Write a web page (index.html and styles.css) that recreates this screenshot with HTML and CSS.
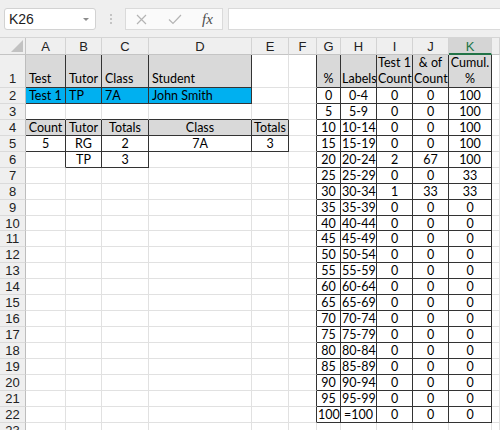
FILE: index.html
```html
<!DOCTYPE html>
<html lang="en">
<head>
<meta charset="utf-8">
<title>Test results</title>
<link rel="stylesheet" href="styles.css">
</head>
<body>
<div class="toolbar">
  <div class="namebox"><span>K26</span><span class="caret"></span></div>
  <div class="grip"><span></span><span></span><span></span></div>
  <div class="fxbox">
    <svg class="ico-x" width="11" height="11" viewBox="0 0 11 11"><path d="M1 1L10 10M10 1L1 10" stroke="#b4b4b4" stroke-width="1.2" fill="none"/></svg>
    <svg class="ico-ok" width="14" height="11" viewBox="0 0 14 11"><path d="M1 5.5L5 9.5L13 1" stroke="#b4b4b4" stroke-width="1.2" fill="none"/></svg>
    <span class="fx">fx</span>
  </div>
  <div class="formula"></div>
</div>

<div class="sheet">
  <!-- column headers -->
  <div class="corner"><svg width="12" height="12" viewBox="0 0 12 12"><path d="M12 0V12H0Z" fill="#c2c2c2"/></svg></div>
  <div class="ch">A</div><div class="ch">B</div><div class="ch">C</div><div class="ch">D</div><div class="ch">E</div><div class="ch">F</div><div class="ch">G</div><div class="ch">H</div><div class="ch">I</div><div class="ch">J</div><div class="ch sel">K</div><div class="ch"></div>

  <!-- row 1 -->
  <div class="rh tall">1</div>
  <div class="g l r b p1">Test</div><div class="g l r b p1">Tutor</div><div class="g l r b p1">Class</div><div class="g l r b p1">Student</div>
  <div></div><div class="r"></div>
  <div class="g r b p1">%</div><div class="g r b p1">Labels</div><div class="g r b">Test 1<br>Count</div><div class="g r b">&amp; of<br>Count</div><div class="g r b">Cumul.<br>%</div><div></div>

  <!-- row 2 -->
  <div class="rh">2</div>
  <div class="bl l r b">Test 1</div><div class="bl l r b">TP</div><div class="bl l r b">7A</div><div class="bl l r b">John Smith</div>
  <div></div><div class="r"></div>
  <div class="r b">0</div><div class="r b">0-4</div><div class="r b">0</div><div class="r b">0</div><div class="r b">100</div><div></div>

  <!-- row 3 -->
  <div class="rh">3</div>
  <div class="b"></div><div class="b"></div><div class="b"></div><div class="b"></div><div class="b"></div><div class="r"></div>
  <div class="r b">5</div><div class="r b">5-9</div><div class="r b">0</div><div class="r b">0</div><div class="r b">100</div><div></div>

  <!-- row 4 -->
  <div class="rh">4</div>
  <div class="g r b">Count</div><div class="g r b">Tutor</div><div class="g r b">Totals</div><div class="g r b">Class</div><div class="g r b">Totals</div><div class="r"></div>
  <div class="r b">10</div><div class="r b">10-14</div><div class="r b">0</div><div class="r b">0</div><div class="r b">100</div><div></div>

  <!-- row 5 -->
  <div class="rh">5</div>
  <div class="r b">5</div><div class="r b">RG</div><div class="r b">2</div><div class="r b">7A</div><div class="r b">3</div><div class="r"></div>
  <div class="r b">15</div><div class="r b">15-19</div><div class="r b">0</div><div class="r b">0</div><div class="r b">100</div><div></div>

  <!-- row 6 -->
  <div class="rh">6</div>
  <div class="r"></div><div class="r b">TP</div><div class="r b">3</div><div></div><div></div><div class="r"></div>
  <div class="r b">20</div><div class="r b">20-24</div><div class="r b">2</div><div class="r b">67</div><div class="r b">100</div><div></div>

  <!-- row 7 -->
  <div class="rh">7</div>
  <div></div><div></div><div></div><div></div><div></div><div class="r"></div>
  <div class="r b">25</div><div class="r b">25-29</div><div class="r b">0</div><div class="r b">0</div><div class="r b">33</div><div></div>

  <!-- row 8 -->
  <div class="rh">8</div>
  <div></div><div></div><div></div><div></div><div></div><div class="r"></div>
  <div class="r b">30</div><div class="r b">30-34</div><div class="r b">1</div><div class="r b">33</div><div class="r b">33</div><div></div>

  <!-- row 9 -->
  <div class="rh">9</div>
  <div></div><div></div><div></div><div></div><div></div><div class="r"></div>
  <div class="r b">35</div><div class="r b">35-39</div><div class="r b">0</div><div class="r b">0</div><div class="r b">0</div><div></div>

  <!-- row 10 -->
  <div class="rh">10</div>
  <div></div><div></div><div></div><div></div><div></div><div class="r"></div>
  <div class="r b">40</div><div class="r b">40-44</div><div class="r b">0</div><div class="r b">0</div><div class="r b">0</div><div></div>

  <!-- row 11 -->
  <div class="rh">11</div>
  <div></div><div></div><div></div><div></div><div></div><div class="r"></div>
  <div class="r b">45</div><div class="r b">45-49</div><div class="r b">0</div><div class="r b">0</div><div class="r b">0</div><div></div>

  <!-- row 12 -->
  <div class="rh">12</div>
  <div></div><div></div><div></div><div></div><div></div><div class="r"></div>
  <div class="r b">50</div><div class="r b">50-54</div><div class="r b">0</div><div class="r b">0</div><div class="r b">0</div><div></div>

  <!-- row 13 -->
  <div class="rh">13</div>
  <div></div><div></div><div></div><div></div><div></div><div class="r"></div>
  <div class="r b">55</div><div class="r b">55-59</div><div class="r b">0</div><div class="r b">0</div><div class="r b">0</div><div></div>

  <!-- row 14 -->
  <div class="rh">14</div>
  <div></div><div></div><div></div><div></div><div></div><div class="r"></div>
  <div class="r b">60</div><div class="r b">60-64</div><div class="r b">0</div><div class="r b">0</div><div class="r b">0</div><div></div>

  <!-- row 15 -->
  <div class="rh">15</div>
  <div></div><div></div><div></div><div></div><div></div><div class="r"></div>
  <div class="r b">65</div><div class="r b">65-69</div><div class="r b">0</div><div class="r b">0</div><div class="r b">0</div><div></div>

  <!-- row 16 -->
  <div class="rh">16</div>
  <div></div><div></div><div></div><div></div><div></div><div class="r"></div>
  <div class="r b">70</div><div class="r b">70-74</div><div class="r b">0</div><div class="r b">0</div><div class="r b">0</div><div></div>

  <!-- row 17 -->
  <div class="rh">17</div>
  <div></div><div></div><div></div><div></div><div></div><div class="r"></div>
  <div class="r b">75</div><div class="r b">75-79</div><div class="r b">0</div><div class="r b">0</div><div class="r b">0</div><div></div>

  <!-- row 18 -->
  <div class="rh">18</div>
  <div></div><div></div><div></div><div></div><div></div><div class="r"></div>
  <div class="r b">80</div><div class="r b">80-84</div><div class="r b">0</div><div class="r b">0</div><div class="r b">0</div><div></div>

  <!-- row 19 -->
  <div class="rh">19</div>
  <div></div><div></div><div></div><div></div><div></div><div class="r"></div>
  <div class="r b">85</div><div class="r b">85-89</div><div class="r b">0</div><div class="r b">0</div><div class="r b">0</div><div></div>

  <!-- row 20 -->
  <div class="rh">20</div>
  <div></div><div></div><div></div><div></div><div></div><div class="r"></div>
  <div class="r b">90</div><div class="r b">90-94</div><div class="r b">0</div><div class="r b">0</div><div class="r b">0</div><div></div>

  <!-- row 21 -->
  <div class="rh">21</div>
  <div></div><div></div><div></div><div></div><div></div><div class="r"></div>
  <div class="r b">95</div><div class="r b">95-99</div><div class="r b">0</div><div class="r b">0</div><div class="r b">0</div><div></div>

  <!-- row 22 -->
  <div class="rh">22</div>
  <div></div><div></div><div></div><div></div><div></div><div class="r"></div>
  <div class="r b">100</div><div class="r b">=100</div><div class="r b">0</div><div class="r b">0</div><div class="r b">0</div><div></div>

  <!-- row 23 -->
  <div class="rh">23</div>
  <div></div><div></div><div></div><div></div><div></div><div></div><div></div><div></div><div></div><div></div><div></div><div></div>
</div>
</body>
</html>
```

FILE: styles.css
```css
* { box-sizing: border-box; }

html, body { margin: 0; }

body {
  width: 500px;
  height: 430px;
  overflow: hidden;
  background: #fff;
  font-family: "Liberation Sans", Arial, sans-serif;
}

/* name box + formula bar */
.toolbar {
  height: 38px;
  background: #efefef;
  border-bottom: 1px solid #d5d5d5;
  display: flex;
  align-items: flex-start;
  padding: 8px 0 0 4px;
}

.namebox {
  width: 92px;
  height: 22px;
  background: #fff;
  border: 1px solid #d2d2d2;
  border-radius: 3px;
  display: flex;
  align-items: center;
  justify-content: space-between;
  padding: 0 6px 0 4px;
  font-size: 14px;
  color: #1d1d1d;
}

.caret {
  width: 0;
  height: 0;
  border-left: 3px solid transparent;
  border-right: 3px solid transparent;
  border-top: 3px solid #8c8c8c;
}

.grip {
  width: 29px;
  height: 22px;
  display: flex;
  flex-direction: column;
  align-items: center;
  justify-content: center;
  gap: 2px;
}

.grip span {
  width: 2px;
  height: 2px;
  background: #c4c4c4;
}

.fxbox {
  width: 98px;
  height: 22px;
  background: #fafafa;
  border: 1px solid #dadada;
  display: flex;
  align-items: center;
}

.ico-x { margin-left: 10px; }
.ico-ok { margin-left: 21px; }

.fx {
  margin-left: 20px;
  font-family: "Liberation Serif", "Times New Roman", serif;
  font-style: italic;
  font-size: 15px;
  color: #4d4d4d;
}

.formula {
  flex: 1;
  height: 22px;
  margin-left: 5px;
  background: #fff;
  border: 1px solid #dadada;
  border-right: 0;
}

/* worksheet grid */
.sheet {
  display: grid;
  grid-template-columns: 26px 40px 36px 47px 103px 37px 28px 24px 36px 36px 36px 43px 1fr;
  grid-template-rows: 17px 33px repeat(22, 15.94px);
  font-family: Lato, "Open Sans", sans-serif;
  font-size: 12.5px;
  color: #000;
}

.sheet > div {
  border-right: 1px solid #e1e1e1;
  border-bottom: 1px solid #e1e1e1;
  line-height: 16px;
  text-align: center;
  white-space: nowrap;
  overflow: hidden;
  padding: 0 1px;
}

.sheet .corner {
  background: #efefef;
  border-right-color: #c4c4c4;
  border-bottom-color: #c4c4c4;
  display: flex;
  align-items: flex-end;
  justify-content: flex-end;
  padding: 0 2px 2px 0;
}

.sheet .ch {
  background: #efefef;
  border-right-color: #d3d3d3;
  border-bottom-color: #c4c4c4;
  font-family: "Liberation Sans", Arial, sans-serif;
  font-size: 13px;
  line-height: 17px;
  color: #222;
}

.sheet .ch.sel {
  background: #d5d5d5;
  color: #217346;
  border-bottom: 2px solid #217346;
}

.sheet .rh {
  background: #efefef;
  border-right-color: #bdbdbd;
  border-bottom-color: #dadada;
  font-family: "Liberation Sans", Arial, sans-serif;
  font-size: 13px;
  color: #222;
}

.sheet .rh.tall { padding-top: 16px; }

/* cell formats */
.sheet .g { background: #d9d9d9; }
.sheet .bl { background: #00b0f0; }
.sheet .l { text-align: left; padding-left: 3px; }
.sheet .p1 { padding-top: 16px; }
.sheet .r { border-right-color: #333; }
.sheet .b { border-bottom-color: #333; }
```
